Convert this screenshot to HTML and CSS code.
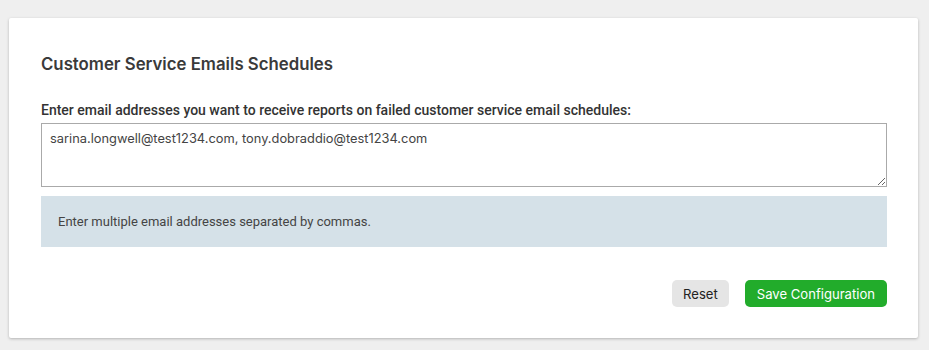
FILE: index.html
```html
<!DOCTYPE html>
<html>
<head>
<meta charset="utf-8">
<link rel="stylesheet" href="styles.css">
</head>
<body>
<div class="card">
  <h2 class="title">Customer Service Emails Schedules</h2>
  <label class="label" for="emails">Enter email addresses you want to receive reports on failed customer service email schedules:</label>
  <textarea id="emails" class="input">sarina.longwell@test1234.com, tony.dobraddio@test1234.com</textarea>
  <div class="hint">Enter multiple email addresses separated by commas.</div>
  <div class="actions">
    <button class="btn btn-reset">Reset</button>
    <button class="btn btn-save">Save Configuration</button>
  </div>
</div>
</body>
</html>
```
FILE: styles.css
```css
html, body { margin: 0; padding: 0; }
body {
  background: #efefef;
  padding: 18px 11px 12px 9px;
  font-family: Roboto, "Liberation Sans", sans-serif;
}
.card {
  background: #fff;
  box-shadow: 0 1px 3px rgba(0,0,0,0.25);
  border-radius: 2px;
  padding: 35px 31px 31px 32px;
  display: flex;
  flex-direction: column;
}
.title {
  margin: 0 0 26px 0;
  font-family: Inter, sans-serif;
  font-weight: 600;
  font-size: 16.8px;
  color: #3a3a3a;
  line-height: 22px;
}
.label {
  font-weight: 500;
  font-size: 14px;
  color: #333;
  line-height: 18px;
  margin-bottom: 4px;
}
.input {
  box-sizing: border-box;
  height: 64px;
  border: 1px solid #aaa;
  padding: 7px 8px 6px;
  font-family: Inter, sans-serif;
  font-size: 12.85px;
  color: #444;
  resize: vertical;
  margin: 0 0 9px 0;
}
.hint {
  background: #d5e1e8;
  padding: 18px 17px;
  font-size: 13px;
  color: #444;
  line-height: 15px;
  height: 15px;
  box-sizing: content-box;
}
.actions {
  display: flex;
  justify-content: flex-end;
  gap: 16px;
  margin-top: 33px;
}
.btn {
  font-family: Inter, sans-serif;
  font-size: 13.1px;
  border: none;
  border-radius: 5px;
  height: 27px;
  padding: 0 12px;
}
.btn-reset { background: #e5e5e5; color: #222; padding: 0 11px; }
.btn-save { background: #22ac2b; color: #fff; }
```
